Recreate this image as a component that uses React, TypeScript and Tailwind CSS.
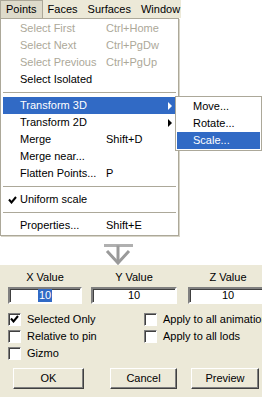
import React from "react";

type MenuEntry =
  | { kind: "item"; label: string; shortcut?: string; disabled?: boolean; active?: boolean; submenu?: boolean; checked?: boolean }
  | { kind: "sep" };

const menuEntries: MenuEntry[] = [
  { kind: "item", label: "Select First", shortcut: "Ctrl+Home", disabled: true },
  { kind: "item", label: "Select Next", shortcut: "Ctrl+PgDw", disabled: true },
  { kind: "item", label: "Select Previous", shortcut: "Ctrl+PgUp", disabled: true },
  { kind: "item", label: "Select Isolated" },
  { kind: "sep" },
  { kind: "item", label: "Transform 3D", active: true, submenu: true },
  { kind: "item", label: "Transform 2D", submenu: true },
  { kind: "item", label: "Merge", shortcut: "Shift+D" },
  { kind: "item", label: "Merge near..." },
  { kind: "item", label: "Flatten Points...", shortcut: "P" },
  { kind: "sep" },
  { kind: "item", label: "Uniform scale", checked: true },
  { kind: "sep" },
  { kind: "item", label: "Properties...", shortcut: "Shift+E" },
];

const subItems = [
  { label: "Move...", active: false },
  { label: "Rotate...", active: false },
  { label: "Scale...", active: true },
];

const menuBar = ["Points", "Faces", "Surfaces", "Window"];

const Check = () => (
  <svg width="9" height="8" viewBox="0 0 9 8" className="block">
    <path d="M1 3.5 L3.5 6.5 L8 1" stroke="#000" strokeWidth="2" fill="none" />
  </svg>
);

const CheckBox = ({ checked, label }: { checked?: boolean; label: string }) => (
  <div className="flex h-[14px] items-center gap-[6px] whitespace-nowrap">
    <div className="flex h-[13px] w-[13px] shrink-0 items-center justify-center border border-t-[#808080] border-l-[#808080] border-b-white border-r-white bg-white shadow-[inset_1px_1px_0_#404040]">
      {checked && <Check />}
    </div>
    <span>{label}</span>
  </div>
);

const XpButton = ({ label, width }: { label: string; width: string }) => (
  <div
    className={`flex h-[21px] ${width} items-center justify-center border border-t-white border-l-white border-b-[#404040] border-r-[#404040] bg-[#ece9d8] shadow-[inset_-1px_-1px_0_#808080]`}
  >
    {label}
  </div>
);

export default function App() {
  return (
    <div className="h-[397px] w-[262px] overflow-hidden bg-white font-['Liberation_Sans',Arial,sans-serif] text-[11px] leading-[13px] text-black">
      {/* menu area */}
      <div className="relative h-[265px]">
        <div className="flex h-[18px] w-fit items-center bg-[#ece9d8]">
          {menuBar.map((name, i) => (
            <div
              key={name}
              className={
                i === 0
                  ? "flex h-[18px] items-center border-t border-l border-r border-t-[#aca899] border-l-[#aca899] border-r-[#aca899] bg-[#dedbcb] px-[5px]"
                  : i === 3
                  ? "flex h-[18px] items-center pl-[5px] pr-px"
                  : "flex h-[18px] items-center px-[5px]"
              }
            >
              {name}
            </div>
          ))}
        </div>

        <div className="w-[179px] border border-[#aca899] bg-white px-[2px] py-[1px] shadow-[1px_1px_0_#d8d5c8]">
          {menuEntries.map((entry, i) =>
            entry.kind === "sep" ? (
              <div key={i} className="flex h-[9px] items-center">
                <div className="h-px w-full bg-[#aca899]" />
              </div>
            ) : (
              <div
                key={i}
                className={`relative flex h-[17px] items-center pl-[17px] ${
                  entry.active ? "bg-[#316ac5] text-white" : entry.disabled ? "text-[#aca899]" : ""
                }`}
              >
                {entry.checked && (
                  <div className="absolute left-[5px] top-[5px]">
                    <Check />
                  </div>
                )}
                <span className="w-[86px] whitespace-nowrap">{entry.label}</span>
                {entry.shortcut && <span className="whitespace-nowrap">{entry.shortcut}</span>}
                {entry.submenu && (
                  <div
                    className={`absolute right-[4px] top-[5px] h-0 w-0 border-y-[4px] border-l-[4px] border-y-transparent ${
                      entry.active ? "border-l-white" : "border-l-black"
                    }`}
                  />
                )}
              </div>
            )
          )}
        </div>

        {/* submenu */}
        <div className="absolute left-[175px] top-[96px] w-[87px] border border-[#aca899] bg-white p-[1px]">
          {subItems.map((s) => (
            <div
              key={s.label}
              className={`flex h-[17px] items-center pl-[16px] ${s.active ? "bg-[#316ac5] text-white" : ""}`}
            >
              {s.label}
            </div>
          ))}
        </div>

        {/* arrow */}
        <svg width="31" height="23" viewBox="0 0 31 23" className="ml-[103px] mt-[6px] block">
          <line x1="1" y1="3.5" x2="30" y2="3.5" stroke="#b0b0b0" strokeWidth="3" />
          <line x1="15" y1="3.5" x2="15" y2="20" stroke="#9a9a9a" strokeWidth="3" />
          <polyline points="4,9 15,21 26,9" stroke="#9a9a9a" strokeWidth="3" fill="none" />
        </svg>
      </div>

      {/* dialog */}
      <div className="h-[132px] bg-[#ece9d8] pt-[6px]">
        <div className="flex pl-[8px]">
          {[
            { label: "X Value", w: "w-[74px]", mr: "mr-[9px]", sel: true },
            { label: "Y Value", w: "w-[86px]", mr: "mr-[11px]", sel: false },
            { label: "Z Value", w: "w-[80px]", mr: "", sel: false },
          ].map((c) => (
            <div key={c.label} className={`${c.w} ${c.mr} shrink-0`}>
              <div className="text-center">{c.label}</div>
              <div className="mt-[3px] flex h-[17px] items-center justify-center border-2 border-t-[#808080] border-l-[#808080] border-b-white border-r-white bg-white shadow-[inset_1px_1px_0_#404040]">
                <span className={c.sel ? "bg-[#316ac5] px-px text-white" : ""}>10</span>
              </div>
            </div>
          ))}
        </div>

        <div className="mt-[8px] flex pl-[8px]">
          <div className="flex w-[136px] shrink-0 flex-col gap-[3px]">
            <CheckBox checked label="Selected Only" />
            <CheckBox label="Relative to pin" />
            <CheckBox label="Gizmo" />
          </div>
          <div className="flex flex-col gap-[3px]">
            <CheckBox label="Apply to all animations" />
            <CheckBox label="Apply to all lods" />
          </div>
        </div>

        <div className="mt-[8px] flex pl-[13px]">
          <XpButton label="OK" width="w-[71px]" />
          <div className="w-[26px]" />
          <XpButton label="Cancel" width="w-[67px]" />
          <div className="w-[14px]" />
          <XpButton label="Preview" width="w-[68px]" />
        </div>
      </div>
    </div>
  );
}
